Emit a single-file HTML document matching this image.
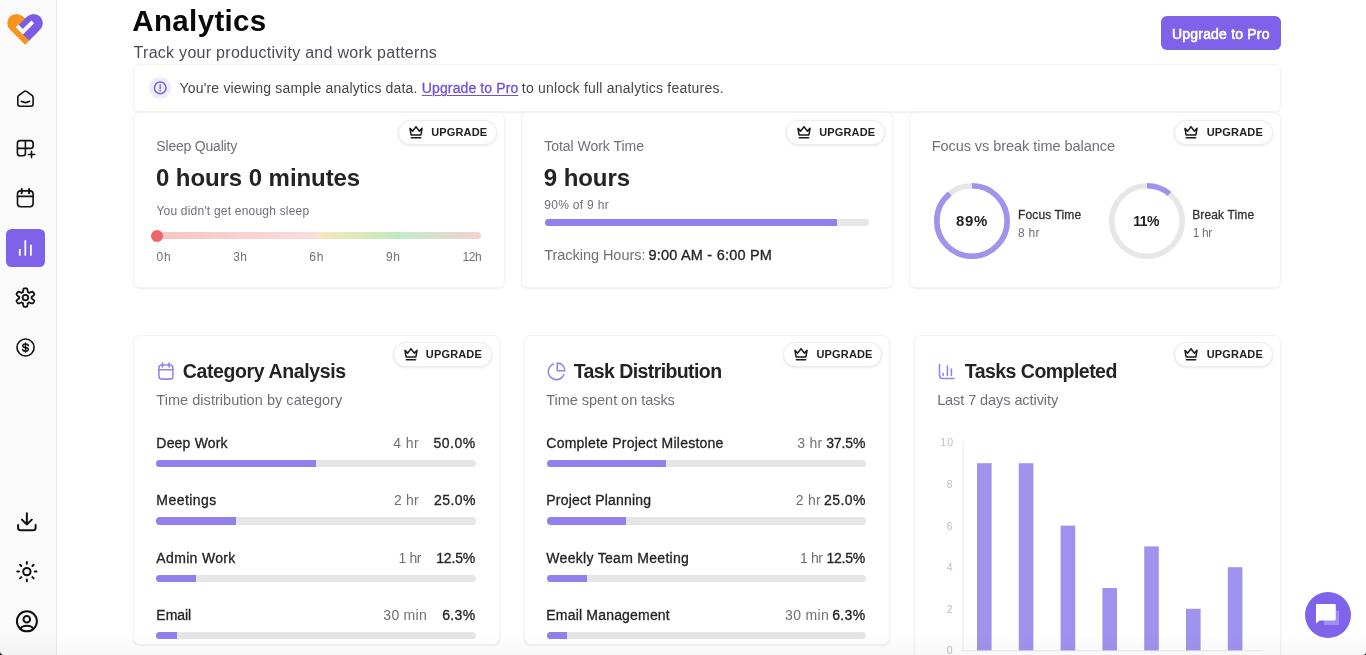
<!DOCTYPE html>
<html lang="en">
<head>
<meta charset="utf-8">
<title>Analytics</title>
<style>
*{box-sizing:border-box;margin:0;padding:0}
html,body{width:1366px;height:655px;overflow:hidden;background:#fff}
body{font-family:"Liberation Sans",sans-serif;color:#1d1d22;position:relative}
.t{position:absolute;white-space:nowrap;line-height:1}
.side{position:absolute;left:0;top:0;width:57px;height:655px;background:#fafafa;border-right:1px solid #ededed}
.ico{position:absolute;fill:none;stroke:#141414;stroke-width:1.6;stroke-linecap:round;stroke-linejoin:round}
.active{position:absolute;left:6px;top:229px;width:39px;height:38px;border-radius:5.500px;background:#7e62ea}
.btn{position:absolute;left:1161px;top:16.200px;width:120px;height:34px;border-radius:6px;background:#7e62ea}
.card{position:absolute;background:#fff;border:1px solid #f3f3f4;border-radius:7px;box-shadow:0 1px 3px rgba(0,0,0,.045),0 1px 2px rgba(0,0,0,.03)}
.pill{position:absolute;width:99px;height:25px;border-radius:12.500px;background:#fff;border:1px solid #ececef;box-shadow:0 1px 3px rgba(0,0,0,.09)}
.crown{position:absolute;fill:none;stroke:#1b1b1f;stroke-width:1.5;stroke-linecap:round;stroke-linejoin:round}
.track{position:absolute;height:7.500px;border-radius:4px;background:#e6e6e8;overflow:hidden}
.track i{display:block;height:8px;background:#937fec}
.hico{position:absolute;fill:none;stroke:#9a88ec;stroke-width:1.5;stroke-linecap:round;stroke-linejoin:round}
</style>
</head>
<body>
<!-- sidebar -->
<div class="side"></div>
<svg style="position:absolute;left:0;top:0" width="50" height="50" viewBox="0 0 50 50">
  <g transform="rotate(45 16.4 23.1)"><path d="M16.4 13.9 h21.5 v18.4 h-21.5 a9.2 9.2 0 0 1 0 -18.4z" fill="#f7941f"/></g>
  <g transform="rotate(-45 33.6 23.1)"><path d="M33.6 13.9 h-15.56 v18.4 h15.56 a9.2 9.2 0 0 0 0 -18.4z" fill="#7b5be8"/></g>
  <polyline points="17.0,25.8 22.9,31.7 32.8,21.8" fill="none" stroke="#fff" stroke-width="3.8"/>
</svg>
<div class="active"></div>
<svg style="position:absolute;left:0;top:0;fill:none;stroke:#111113;stroke-width:1.62;stroke-linecap:round;stroke-linejoin:round" width="57" height="655" viewBox="0 0 57 655">
<!-- home -->
<path d="M24.300 91.400Q25.400 90.600 26.500 91.400L32.300 95.600Q33.100 96.200 33.100 97.200V104.100Q33.100 106.300 30.900 106.300H20Q17.800 106.300 17.800 104.100V97.200Q17.800 96.200 18.600 95.600Z"/><path d="M21.300 101.300Q25.400 103.900 29.500 101.300"/>
<!-- widget add -->
<path d="M25.400 140.600H20.200Q17.400 140.600 17.400 143.400V153Q17.400 155.800 20.200 155.800H22.900Q25.400 155.800 25.400 153.300V140.600H30.300Q33.100 140.600 33.100 143.400V145.900Q33.100 148.400 30.600 148.400H17.400"/><path d="M28.400 154.500H34.700M31.500 151.400V157.600"/>
<!-- calendar -->
<rect x="17.500" y="190.900" width="15.600" height="15.900" rx="3.200"/><path d="M17.500 196.400H33.100"/><path d="M21.700 189V193.300M29.100 189V193.300" stroke-width="2"/>
<!-- chart (active) -->
<path d="M19.800 249.700V254.900M25.300 240.900V254.900M30.900 245.300V254.900" stroke="#fff" stroke-width="1.800"/>
<!-- settings -->
<circle cx="25.400" cy="297.600" r="2.800" stroke-width="1.800"/><path d="M31.64 297.60L31.64 297.39L31.62 297.18L31.61 296.97L31.70 296.75L32.03 296.48L32.51 296.15L33.07 295.76L33.61 295.34L34.04 294.90L34.27 294.50L34.27 294.15L34.14 293.86L34.00 293.57L33.85 293.28L33.69 293.00L33.51 292.72L33.33 292.46L33.14 292.19L32.94 291.94L32.63 291.76L32.15 291.76L31.54 291.90L30.89 292.13L30.26 292.41L29.72 292.64L29.32 292.78L29.07 292.75L28.89 292.63L28.71 292.51L28.52 292.40L28.33 292.30L28.14 292.21L27.94 292.12L27.78 291.92L27.70 291.52L27.65 290.95L27.58 290.29L27.47 289.63L27.29 289.06L27.04 288.66L26.73 288.49L26.40 288.45L26.07 288.42L25.73 288.41L25.40 288.40L25.07 288.41L24.73 288.42L24.40 288.45L24.07 288.49L23.76 288.66L23.51 289.06L23.33 289.63L23.22 290.29L23.15 290.95L23.10 291.52L23.02 291.92L22.86 292.12L22.66 292.21L22.47 292.30L22.28 292.40L22.09 292.51L21.91 292.63L21.73 292.75L21.48 292.78L21.08 292.64L20.54 292.41L19.91 292.13L19.26 291.90L18.65 291.76L18.17 291.76L17.86 291.94L17.66 292.19L17.47 292.46L17.29 292.72L17.11 293.00L16.95 293.28L16.80 293.57L16.66 293.86L16.53 294.15L16.53 294.50L16.76 294.90L17.19 295.34L17.73 295.76L18.29 296.15L18.77 296.48L19.10 296.75L19.19 296.97L19.18 297.18L19.16 297.39L19.16 297.60L19.16 297.81L19.18 298.02L19.19 298.23L19.10 298.45L18.77 298.72L18.29 299.05L17.73 299.44L17.19 299.86L16.76 300.30L16.53 300.70L16.53 301.05L16.66 301.34L16.80 301.63L16.95 301.92L17.11 302.20L17.29 302.48L17.47 302.74L17.66 303.01L17.86 303.26L18.17 303.44L18.65 303.44L19.26 303.30L19.91 303.07L20.54 302.79L21.08 302.56L21.48 302.42L21.73 302.45L21.91 302.57L22.09 302.69L22.28 302.80L22.47 302.90L22.66 302.99L22.86 303.08L23.02 303.28L23.10 303.68L23.15 304.25L23.22 304.91L23.33 305.57L23.51 306.14L23.76 306.54L24.07 306.71L24.40 306.75L24.73 306.78L25.07 306.79L25.40 306.80L25.73 306.79L26.07 306.78L26.40 306.75L26.73 306.71L27.04 306.54L27.29 306.14L27.47 305.57L27.58 304.91L27.65 304.25L27.70 303.68L27.78 303.28L27.94 303.08L28.14 302.99L28.33 302.90L28.52 302.80L28.71 302.69L28.89 302.57L29.07 302.45L29.32 302.42L29.72 302.56L30.26 302.79L30.89 303.07L31.54 303.30L32.15 303.44L32.63 303.44L32.94 303.26L33.14 303.01L33.33 302.74L33.51 302.48L33.69 302.20L33.85 301.92L34.00 301.63L34.14 301.34L34.27 301.05L34.27 300.70L34.04 300.30L33.61 299.86L33.07 299.44L32.51 299.05L32.03 298.72L31.70 298.45L31.61 298.23L31.62 298.02L31.64 297.81Z" stroke-width="1.800"/>
<!-- dollar -->
<circle cx="25.550" cy="347.500" r="8.550"/><path d="M25.500 343V352.100M28.300 345.700C28.300 344.500 27 343.900 25.500 343.900C24 343.900 22.800 344.600 22.800 345.700C22.800 346.900 24 347.300 25.500 347.500C27 347.700 28.300 348.200 28.300 349.400C28.300 350.500 27 351.100 25.500 351.100C24 351.100 22.700 350.600 22.700 349.400" stroke-width="1.500"/>
<!-- download -->
<g stroke-width="2"><path d="M26.850 513.300V524.300M21.900 519.600L26.850 524.500L31.800 519.600"/><path d="M18.100 525V527.700Q18.100 530.200 20.600 530.200H33.100Q35.600 530.200 35.600 527.700V525"/></g>
<!-- sun -->
<g stroke-width="2" transform="translate(26.850 571.600)"><circle r="3.700"/><path d="M0 -7.900V-9.600M0 7.900V9.600M-7.900 0H-9.600M7.900 0H9.600M-5.550 -5.550L-6.800 -6.800M5.550 5.550L6.800 6.800M5.550 -5.550L6.800 -6.800M-5.550 5.550L-6.800 6.800"/></g>
<!-- user -->
<g stroke-width="2"><circle cx="26.900" cy="621.350" r="10"/><circle cx="26.800" cy="619.200" r="3.300"/><path d="M20.600 628.700C21.500 626.600 23.500 625.700 26.850 625.700C30.200 625.700 32.200 626.600 33.100 628.700"/></g>
</svg>

<!-- header -->
<div class="btn"></div>

<!-- banner -->
<div class="card" style="left:133px;top:64px;width:1148px;height:48px"></div>
<div style="position:absolute;left:149px;top:77px;width:22px;height:22px;border-radius:11px;background:#f0edfd"></div>
<svg style="position:absolute;left:150px;top:78px" width="20" height="20" viewBox="150 78 20 20"><circle cx="160.200" cy="87.900" r="5.800" fill="none" stroke="#7a60de" stroke-width="1.500"/><path d="M160.200 85.100V88.400" stroke="#7a60de" stroke-width="1.500" stroke-linecap="round"/><circle cx="160.200" cy="90.700" r=".85" fill="#7a60de"/></svg>

<!-- row 1 cards -->
<div class="card" style="left:133px;top:112px;width:372px;height:176px"></div>
<div class="card" style="left:521px;top:112px;width:372px;height:176px"></div>
<div class="card" style="left:909px;top:112px;width:372px;height:176px"></div>
<!-- row 2 cards -->
<div class="card" style="left:133px;top:334.500px;width:366.670px;height:310.500px"></div>
<div class="card" style="left:523.670px;top:334.500px;width:366.670px;height:310.500px"></div>
<div class="card" style="left:914.330px;top:334.500px;width:366.670px;height:340px"></div>

<!-- pills -->
<div class="pill" style="left:397.700px;top:119.500px"></div>
<div class="pill" style="left:785.700px;top:119.500px"></div>
<div class="pill" style="left:1173.500px;top:119.500px"></div>
<div class="pill" style="left:392.700px;top:342px"></div>
<div class="pill" style="left:783.300px;top:342px"></div>
<div class="pill" style="left:1173.500px;top:342px"></div>
<svg class="crown" style="left:407.59999999999997px;top:124.6px" width="16" height="14" viewBox="0 0 16 14"><path d="M1.950 3.400L4.700 6.100L8 1.700L11.300 6.100L14.050 3.400L12.900 9.900H3.100Z"/><path d="M3.400 12.800H12.600"/></svg><svg class="crown" style="left:795.6px;top:124.6px" width="16" height="14" viewBox="0 0 16 14"><path d="M1.950 3.400L4.700 6.100L8 1.700L11.300 6.100L14.050 3.400L12.900 9.900H3.100Z"/><path d="M3.400 12.800H12.600"/></svg><svg class="crown" style="left:1183.4px;top:124.6px" width="16" height="14" viewBox="0 0 16 14"><path d="M1.950 3.400L4.700 6.100L8 1.700L11.300 6.100L14.050 3.400L12.900 9.900H3.100Z"/><path d="M3.400 12.800H12.600"/></svg><svg class="crown" style="left:402.59999999999997px;top:347.1px" width="16" height="14" viewBox="0 0 16 14"><path d="M1.950 3.400L4.700 6.100L8 1.700L11.300 6.100L14.050 3.400L12.900 9.900H3.100Z"/><path d="M3.400 12.800H12.600"/></svg><svg class="crown" style="left:793.1999999999999px;top:347.1px" width="16" height="14" viewBox="0 0 16 14"><path d="M1.950 3.400L4.700 6.100L8 1.700L11.300 6.100L14.050 3.400L12.900 9.900H3.100Z"/><path d="M3.400 12.800H12.600"/></svg><svg class="crown" style="left:1183.4px;top:347.1px" width="16" height="14" viewBox="0 0 16 14"><path d="M1.950 3.400L4.700 6.100L8 1.700L11.300 6.100L14.050 3.400L12.900 9.900H3.100Z"/><path d="M3.400 12.800H12.600"/></svg>

<!-- sleep bar -->
<div style="position:absolute;left:157px;top:231.500px;width:323.700px;height:7.600px;border-radius:4px;overflow:hidden;background:linear-gradient(90deg,#f9c3c3 0%,#fcdcdc 50%,#f7e8b8 50%,#bfe9bd 75%,#c3eccb 75%,#f4d0d0 100%)"></div>
<div style="position:absolute;left:150.500px;top:229.800px;width:12px;height:12px;border-radius:6px;background:#ef646b"></div>

<!-- work bar -->
<div class="track" style="left:544.500px;top:219.200px;width:324.500px;height:7px"><i style="width:90%;height:7px"></i></div>

<!-- rings -->
<svg style="position:absolute;left:932px;top:181px" width="80" height="80" viewBox="0 0 80 80"><circle cx="40" cy="40" r="35.200" fill="none" stroke="#e7e7e9" stroke-width="5.600"/><circle cx="40" cy="40" r="35.200" fill="none" stroke="#a093ee" stroke-width="5.600" stroke-dasharray="196.840 221.170" transform="rotate(-90 40 40)"/></svg>
<svg style="position:absolute;left:1106.500px;top:181px" width="80" height="80" viewBox="0 0 80 80"><circle cx="40" cy="40" r="35.200" fill="none" stroke="#e7e7e9" stroke-width="5.600"/><circle cx="40" cy="40" r="35.200" fill="none" stroke="#a093ee" stroke-width="5.600" stroke-dasharray="24.330 221.170" transform="rotate(-90 40 40)"/></svg>

<!-- heading icons -->
<svg style="position:absolute;left:150px;top:355px;fill:none;stroke:#9483ea;stroke-width:1.550;stroke-linecap:round;stroke-linejoin:round" width="820" height="40" viewBox="150 355 820 40">
<rect x="158.900" y="364.900" width="14" height="14.200" rx="2.800"/><path d="M158.900 369.700H172.900"/><path d="M162.500 363.200V366.800M169.200 363.200V366.800" stroke-width="1.800"/>
<path d="M553.660 364.080A8 8 0 1 0 563.800 374.600"/><path d="M557.300 363.100V370.700H564.900A7.600 7.600 0 0 0 557.300 363.100Z"/>
<path d="M939.500 364.500V375.500Q939.500 378.500 942.500 378.500H954"/><path d="M943.100 373.200V375.400M947.400 366V375.400M951.400 369V375.400"/>
</svg>

<!-- bars card 4 -->
<div class="track" style="left:156.400px;top:459.600px;width:319.300px"><i style="width:50%"></i></div>
<div class="track" style="left:156.400px;top:517px;width:319.300px"><i style="width:25%"></i></div>
<div class="track" style="left:156.400px;top:574.500px;width:319.300px"><i style="width:12.500%"></i></div>
<div class="track" style="left:156.400px;top:631.900px;width:319.300px"><i style="width:6.300%"></i></div>
<!-- bars card 5 -->
<div class="track" style="left:546.600px;top:459.600px;width:319.300px"><i style="width:37.500%"></i></div>
<div class="track" style="left:546.600px;top:517px;width:319.300px"><i style="width:25%"></i></div>
<div class="track" style="left:546.600px;top:574.500px;width:319.300px"><i style="width:12.500%"></i></div>
<div class="track" style="left:546.600px;top:631.900px;width:319.300px"><i style="width:6.300%"></i></div>

<!-- chart -->
<svg style="position:absolute;left:914px;top:430px" width="367" height="225" viewBox="914 430 367 225">
  <path d="M963 441V651M962.500 650.800H1262" stroke="#e9e9ec" stroke-width="1" fill="none"/>
  <g fill="#a093ee"><rect x="977.0" y="463.2" width="14.600" height="187.2"/><rect x="1018.8" y="463.2" width="14.600" height="187.2"/><rect x="1060.6" y="525.6" width="14.600" height="124.8"/><rect x="1102.4" y="588.0" width="14.600" height="62.4"/><rect x="1144.2" y="546.4" width="14.600" height="104.0"/><rect x="1186.0" y="608.8" width="14.600" height="41.6"/><rect x="1227.8" y="567.2" width="14.600" height="83.2"/></g>
</svg>

<div style="position:absolute;left:0;top:0;width:1366px;height:655px;will-change:transform">
<div class="t" style="left:132.35px;top:5.75px;font-size:29.5px;color:#09090b;letter-spacing:0.341px;font-weight:700;">Analytics</div>
<div class="t" style="left:133.58px;top:44.50px;font-size:16px;color:#4b4b57;letter-spacing:0.282px;">Track your productivity and work patterns</div>
<div class="t" style="left:1172.05px;top:27.00px;font-size:14px;color:#ffffff;letter-spacing:0.188px;-webkit-text-stroke:0.55px #ffffff;">Upgrade to Pro</div>
<div class="t" style="left:179.55px;top:81.00px;font-size:14px;color:#45454f;letter-spacing:0.171px;">You&#x27;re viewing sample analytics data.</div>
<div class="t" style="left:421.85px;top:81.00px;font-size:14px;color:#6f51dc;letter-spacing:0.111px;-webkit-text-stroke:0.3px #6f51dc;text-decoration:underline;text-underline-offset:1.5px;text-decoration-thickness:1px;">Upgrade to Pro</div>
<div class="t" style="left:521.85px;top:81.00px;font-size:14px;color:#45454f;letter-spacing:0.217px;">to unlock full analytics features.</div>
<div class="t" style="left:156.35px;top:139.00px;font-size:14px;color:#6f6f78;letter-spacing:-0.207px;">Sleep Quality</div>
<div class="t" style="left:155.96px;top:165.50px;font-size:24px;color:#232327;letter-spacing:-0.070px;font-weight:700;">0 hours 0 minutes</div>
<div class="t" style="left:156.43px;top:205.00px;font-size:12px;color:#6f6f78;letter-spacing:0.209px;">You didn&#x27;t get enough sleep</div>
<div class="t" style="left:156.43px;top:251.00px;font-size:12px;color:#6f6f78;letter-spacing:0.977px;">0h</div>
<div class="t" style="left:233.23px;top:251.00px;font-size:12px;color:#6f6f78;letter-spacing:0.377px;">3h</div>
<div class="t" style="left:309.13px;top:251.00px;font-size:12px;color:#6f6f78;letter-spacing:0.977px;">6h</div>
<div class="t" style="left:385.93px;top:251.00px;font-size:12px;color:#6f6f78;letter-spacing:0.677px;">9h</div>
<div class="t" style="left:462.43px;top:251.00px;font-size:12px;color:#6f6f78;letter-spacing:-0.420px;">12h</div>
<div class="t" style="left:544.25px;top:139.00px;font-size:14px;color:#6f6f78;letter-spacing:-0.030px;">Total Work Time</div>
<div class="t" style="left:543.86px;top:165.50px;font-size:24px;color:#232327;letter-spacing:-0.086px;font-weight:700;">9 hours</div>
<div class="t" style="left:544.33px;top:199.00px;font-size:12px;color:#6f6f78;letter-spacing:0.296px;">90% of 9 hr</div>
<div class="t" style="left:544.23px;top:247.75px;font-size:14.5px;color:#6f6f78;letter-spacing:-0.042px;">Tracking Hours:</div>
<div class="t" style="left:648.43px;top:247.75px;font-size:14.5px;color:#232327;letter-spacing:0.215px;-webkit-text-stroke:0.3px #232327;">9:00 AM - 6:00 PM</div>
<div class="t" style="left:931.63px;top:138.75px;font-size:14.5px;color:#6f6f78;letter-spacing:-0.047px;">Focus vs break time balance</div>
<div class="t" style="left:956.01px;top:213.00px;font-size:15px;color:#232327;letter-spacing:0.719px;font-weight:700;">89%</div>
<div class="t" style="left:1133.25px;top:214.00px;font-size:14px;color:#232327;letter-spacing:-0.490px;font-weight:700;">11%</div>
<div class="t" style="left:1018.03px;top:209.00px;font-size:12px;color:#333338;letter-spacing:0.124px;-webkit-text-stroke:0.3px #333338;">Focus Time</div>
<div class="t" style="left:1018.03px;top:227.00px;font-size:12px;color:#6f6f78;letter-spacing:0.249px;">8 hr</div>
<div class="t" style="left:1192.13px;top:209.00px;font-size:12px;color:#333338;letter-spacing:0.150px;-webkit-text-stroke:0.3px #333338;">Break Time</div>
<div class="t" style="left:1192.73px;top:227.00px;font-size:12px;color:#6f6f78;letter-spacing:-0.420px;">1 hr</div>
<div class="t" style="left:431.17px;top:126.50px;font-size:11px;color:#222226;letter-spacing:0.157px;font-weight:700;">UPGRADE</div>
<div class="t" style="left:819.17px;top:126.50px;font-size:11px;color:#222226;letter-spacing:0.157px;font-weight:700;">UPGRADE</div>
<div class="t" style="left:1206.77px;top:126.50px;font-size:11px;color:#222226;letter-spacing:0.157px;font-weight:700;">UPGRADE</div>
<div class="t" style="left:425.87px;top:348.50px;font-size:11px;color:#222226;letter-spacing:0.157px;font-weight:700;">UPGRADE</div>
<div class="t" style="left:816.47px;top:348.50px;font-size:11px;color:#222226;letter-spacing:0.157px;font-weight:700;">UPGRADE</div>
<div class="t" style="left:1206.77px;top:348.50px;font-size:11px;color:#222226;letter-spacing:0.157px;font-weight:700;">UPGRADE</div>
<div class="t" style="left:182.84px;top:362.25px;font-size:19.5px;color:#232327;letter-spacing:-0.389px;font-weight:700;">Category Analysis</div>
<div class="t" style="left:156.33px;top:392.75px;font-size:14.5px;color:#6f6f78;letter-spacing:0.039px;">Time distribution by category</div>
<div class="t" style="left:156.35px;top:436.00px;font-size:14px;color:#232327;letter-spacing:0.189px;-webkit-text-stroke:0.3px #232327;">Deep Work</div>
<div class="t" style="left:393.25px;top:436.00px;font-size:14px;color:#6f6f78;letter-spacing:0.456px;">4 hr</div>
<div class="t" style="left:433.45px;top:436.00px;font-size:14px;color:#232327;letter-spacing:0.547px;-webkit-text-stroke:0.3px #232327;">50.0%</div>
<div class="t" style="left:156.35px;top:493.00px;font-size:14px;color:#232327;letter-spacing:0.454px;-webkit-text-stroke:0.3px #232327;">Meetings</div>
<div class="t" style="left:394.05px;top:493.00px;font-size:14px;color:#6f6f78;letter-spacing:0.189px;">2 hr</div>
<div class="t" style="left:434.05px;top:493.00px;font-size:14px;color:#232327;letter-spacing:0.397px;-webkit-text-stroke:0.3px #232327;">25.0%</div>
<div class="t" style="left:156.35px;top:551.00px;font-size:14px;color:#232327;letter-spacing:0.334px;-webkit-text-stroke:0.3px #232327;">Admin Work</div>
<div class="t" style="left:398.45px;top:551.00px;font-size:14px;color:#6f6f78;letter-spacing:-0.344px;">1 hr</div>
<div class="t" style="left:436.15px;top:551.00px;font-size:14px;color:#232327;letter-spacing:-0.153px;-webkit-text-stroke:0.3px #232327;">12.5%</div>
<div class="t" style="left:156.35px;top:608.00px;font-size:14px;color:#232327;letter-spacing:-0.056px;-webkit-text-stroke:0.3px #232327;">Email</div>
<div class="t" style="left:383.35px;top:608.00px;font-size:14px;color:#6f6f78;letter-spacing:0.272px;">30 min</div>
<div class="t" style="left:442.15px;top:608.00px;font-size:14px;color:#232327;letter-spacing:0.390px;-webkit-text-stroke:0.3px #232327;">6.3%</div>
<div class="t" style="left:573.74px;top:362.25px;font-size:19.5px;color:#232327;letter-spacing:-0.594px;font-weight:700;">Task Distribution</div>
<div class="t" style="left:546.33px;top:392.75px;font-size:14.5px;color:#6f6f78;letter-spacing:-0.038px;">Time spent on tasks</div>
<div class="t" style="left:546.35px;top:436.00px;font-size:14px;color:#232327;letter-spacing:0.232px;-webkit-text-stroke:0.3px #232327;">Complete Project Milestone</div>
<div class="t" style="left:797.25px;top:436.00px;font-size:14px;color:#6f6f78;letter-spacing:0.256px;">3 hr</div>
<div class="t" style="left:826.15px;top:436.00px;font-size:14px;color:#232327;letter-spacing:-0.128px;-webkit-text-stroke:0.3px #232327;">37.5%</div>
<div class="t" style="left:546.35px;top:493.00px;font-size:14px;color:#232327;letter-spacing:0.183px;-webkit-text-stroke:0.3px #232327;">Project Planning</div>
<div class="t" style="left:795.75px;top:493.00px;font-size:14px;color:#6f6f78;letter-spacing:0.289px;">2 hr</div>
<div class="t" style="left:824.05px;top:493.00px;font-size:14px;color:#232327;letter-spacing:0.397px;-webkit-text-stroke:0.3px #232327;">25.0%</div>
<div class="t" style="left:546.35px;top:551.00px;font-size:14px;color:#232327;letter-spacing:0.293px;-webkit-text-stroke:0.3px #232327;">Weekly Team Meeting</div>
<div class="t" style="left:799.95px;top:551.00px;font-size:14px;color:#6f6f78;letter-spacing:-0.344px;">1 hr</div>
<div class="t" style="left:826.45px;top:551.00px;font-size:14px;color:#232327;letter-spacing:-0.228px;-webkit-text-stroke:0.3px #232327;">12.5%</div>
<div class="t" style="left:546.35px;top:608.00px;font-size:14px;color:#232327;letter-spacing:0.184px;-webkit-text-stroke:0.3px #232327;">Email Management</div>
<div class="t" style="left:785.05px;top:608.00px;font-size:14px;color:#6f6f78;letter-spacing:0.332px;">30 min</div>
<div class="t" style="left:832.15px;top:608.00px;font-size:14px;color:#232327;letter-spacing:0.390px;-webkit-text-stroke:0.3px #232327;">6.3%</div>
<div class="t" style="left:964.74px;top:362.25px;font-size:19.5px;color:#232327;letter-spacing:-0.529px;font-weight:700;">Tasks Completed</div>
<div class="t" style="left:937.13px;top:392.75px;font-size:14.5px;color:#6f6f78;letter-spacing:-0.077px;">Last 7 days activity</div>
<div class="t" style="left:940.19px;top:436.75px;font-size:10.5px;color:#bdbdc3;letter-spacing:1.131px;">10</div>
<div class="t" style="left:946.68px;top:478.75px;font-size:10.5px;color:#bdbdc3;letter-spacing:0.000px;">8</div>
<div class="t" style="left:946.68px;top:520.75px;font-size:10.5px;color:#bdbdc3;letter-spacing:0.000px;">6</div>
<div class="t" style="left:946.68px;top:561.75px;font-size:10.5px;color:#bdbdc3;letter-spacing:0.000px;">4</div>
<div class="t" style="left:946.68px;top:603.75px;font-size:10.5px;color:#bdbdc3;letter-spacing:0.000px;">2</div>
<div class="t" style="left:946.68px;top:644.75px;font-size:10.5px;color:#bdbdc3;letter-spacing:0.000px;">0</div>
</div>

<!-- bottom fade -->
<div style="position:absolute;left:0;top:632px;width:1366px;height:23px;background:linear-gradient(180deg,rgba(0,0,0,0),rgba(0,0,0,.028))"></div>
<!-- chat bubble -->
<div style="position:absolute;left:1305px;top:592px;width:46px;height:46px;border-radius:23px;background:#7f63ea"></div>
<svg style="position:absolute;left:1305px;top:592px" width="46" height="46" viewBox="0 0 46 46"><path d="M19 18.500h15v14.600H19z" fill="#fff" opacity=".28"/><path d="M12.300 12h17.200a1.300 1.300 0 0 1 1.300 1.300v13.800a1.300 1.300 0 0 1-1.300 1.300H14.600l-3.600 3.200V13.300a1.300 1.300 0 0 1 1.300-1.300z" fill="#fff"/></svg>
<!-- corners -->
<svg style="position:absolute;left:0;top:651px" width="4" height="4"><path d="M0 0A4 4 0 0 0 4 4H0z" fill="#000"/></svg>
<svg style="position:absolute;left:1363px;top:652px" width="3" height="3"><path d="M3 0A3 3 0 0 1 0 3H3z" fill="#000"/></svg>
</body>
</html>
